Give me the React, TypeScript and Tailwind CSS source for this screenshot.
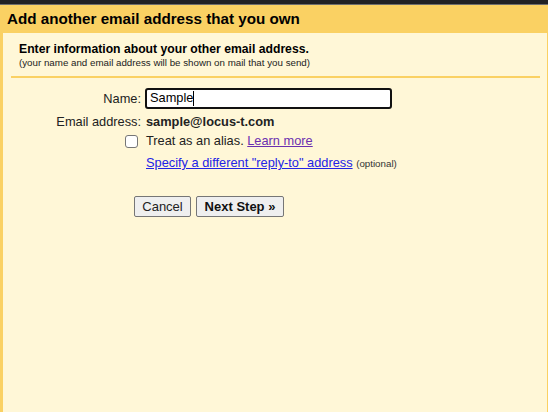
export default function App() {
  return (
    <div
      className="w-[548px] h-[412px] flex flex-col bg-[#fad163] text-[#222]"
      style={{ fontFamily: '"Liberation Sans", Arial, sans-serif' }}
    >
      {/* window top edge */}
      <div className="h-[4px] bg-[#202124]" />
      <div className="h-px bg-[#6d6d6d]" />

      {/* title bar */}
      <div className="h-[28px] flex items-center pl-[7px]">
        <h1 className="text-[15.2px] font-bold text-black leading-none">Add another email address that you own</h1>
      </div>

      <div className="flex-1 ml-[3px] mr-px bg-[#fff7d7]">
        <div className="pl-[16px] pt-[9px]">
          <p className="text-[12.2px] font-bold leading-[14px] text-black">Enter information about your other email address.</p>
          <p className="text-[9.75px] leading-[12px] text-[#222] mt-[1px]">
            (your name and email address will be shown on mail that you send)
          </p>
        </div>

        <div className="ml-[8px] mr-[7px] mt-[7px] h-[2px] bg-[#fad163]" />

        <div className="mt-[10px] flex flex-col text-[12.8px]">
          <div className="flex items-center gap-[4px] h-[21px]">
            <label className="w-[138px] text-right">Name:</label>
            <div className="w-[247px] h-[21px] flex items-center border-2 border-[#111] rounded-[3px] bg-white px-[3px]">
              <span className="leading-none text-black">Sample</span>
              <span className="w-px h-[15px] bg-black" />
            </div>
          </div>

          <div className="flex items-center gap-[5px] h-[16px] mt-[5px]">
            <span className="w-[138px] text-right">Email address:</span>
            <span className="font-bold">sample@locus-t.com</span>
          </div>

          <div className="flex items-center gap-[5px] h-[18px] mt-[2px]">
            <div className="w-[138px] flex justify-end">
              <span className="w-[13px] h-[13px] mr-[3px] rounded-[3px] border border-[#767676] bg-white" />
            </div>
            <span>
              Treat as an alias.{" "}
              <a className="text-[#6b2fb0] underline cursor-pointer">Learn more</a>
            </span>
          </div>

          <div className="flex items-center gap-[5px] h-[16px] mt-[5px]">
            <span className="w-[138px]" />
            <span>
              <a className="text-[#2323e6] underline cursor-pointer">Specify a different "reply-to" address</a>{" "}
              <span className="text-[9.75px] text-[#333]">(optional)</span>
            </span>
          </div>

          <div className="flex gap-[5px] mt-[25px] pl-[131px]">
            <button className="w-[57px] h-[21px] rounded-[2px] border border-[#767676] bg-[#efefef] text-[13px] text-[#222] leading-none">
              Cancel
            </button>
            <button className="w-[88px] h-[21px] rounded-[2px] border border-[#767676] bg-[#efefef] text-[13px] font-bold text-[#111] leading-none">
              Next Step »
            </button>
          </div>
        </div>
      </div>
    </div>
  );
}
